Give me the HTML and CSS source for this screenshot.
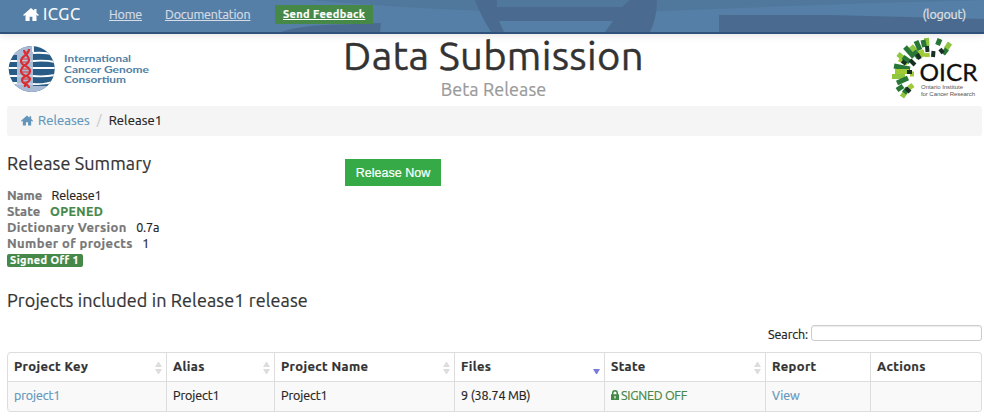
FILE: index.html
```html
<!DOCTYPE html>
<html lang="en">
<head>
<meta charset="utf-8">
<title>ICGC Data Submission</title>
<link rel="stylesheet" href="styles.css">
</head>
<body>
<nav class="navbar">
  <svg class="navbar-art" width="984" height="32" viewBox="0 0 984 32" aria-hidden="true">
    <path fill="#50779c" d="M310 0H984L870 3L660 11H490Q400 8 310 0Z"/>
    <path fill="#4a6b8f" d="M281 32Q300 25 340 24.500L381 23L380 32ZM475 0H497V7H622L630 0H657Q657 18 650 32H605L613 21H499L504 32H491Q481 16 475 0ZM719 15H830L984 19V32H719Z"/>
  </svg>
  <a class="brand" href="#"><svg width="16" height="13" viewBox="0 0 17 14"><path fill="#fff" d="M8.500 0L0 7.500L1 8.600L2.600 7.300V14H7V9.500H10V14H14.400V7.300L16 8.600L17 7.500L14.400 5V1H12V3Z"/></svg>ICGC</a>
  <a class="nav-link home" href="#">Home</a>
  <a class="nav-link docs" href="#">Documentation</a>
  <a class="feedback" href="#">Send Feedback</a>
  <a class="logout" href="#">(logout)</a>
</nav>
<header class="banner">
  <svg class="icgc-logo" width="160" height="50" viewBox="0 0 160 50">
    <defs><clipPath id="globe"><circle cx="24.700" cy="25" r="23"/></clipPath></defs>
    <g clip-path="url(#globe)">
      <path fill="#285c86" d="M0 0H48V50H0Z"/>
      <path fill="#a9bad5" d="M0 0H26V11H0ZM10 0H26V50H10ZM0 38H26V50H0Z"/>
      <path fill="#a9bad5" d="M26 42H48V50H26Z"/>
      <g fill="none" stroke="#fff" stroke-width="1.800"><path d="M26 9Q38 8 48 11M0 17H10M26 17Q38 16 48 18M0 24H10M26 24H48M0 32H10M26 32Q38 33 48 31M0 39H10M26 40Q38 41 48 37M26 1V8"/></g>
      <path fill="none" stroke="#dce4ef" stroke-width=".8" d="M10 17H26M10 24H26M10 32H26M10 40H26"/>
    </g>
    <g fill="none" stroke="#d92f32"><path stroke-width="2.200" d="M22 5C22 12 14 11 14 17S23 21 23 27S15 31 15 36S22 39 22 44M17 6C17 11 22 11 22 16S14 21 14 27S23 31 23 35S17 38 18 43"/><path stroke-width="1" d="M17 8H22M15 15H22M15 18H21M15 25H22M15 28H22M16 35H22M17 38H21"/></g>
    <g fill="#5180a5" class="icgc-text"><text x="57" y="18" textLength="67" lengthAdjust="spacingAndGlyphs">International</text><text x="57" y="28.600" textLength="85" lengthAdjust="spacingAndGlyphs">Cancer Genome</text><text x="57" y="39.200" textLength="62" lengthAdjust="spacingAndGlyphs">Consortium</text></g>
  </svg>
  <div class="titles"><h1>Data Submission</h1><h2>Beta Release</h2></div>
  <svg class="oicr-logo" width="90" height="64" viewBox="0 0 90 64">
    <g fill="none" stroke-width="5">
      <path stroke="#8fc63f" d="M36.500 1L37 9M60 6L56 12M21 9L30 19M8 17L18 25M2 39.500H15M12 60L17 53"/>
      <path stroke="#287737" d="M26 4L30 13M50 2L47.500 8M15 10L24 20M4 29L20 32M7 46L18 41M7 53L13 49"/>
      <path stroke="#a2ca37" d="M9 22L18 26M5 34.500H19M31 13L33 20M37 16L37.500 20M19 51L23 48M20 37H24"/>
      <path stroke="#287737" d="M33 3L34.500 10M57 12L53 17M24 14L29 21M13 20L20 25M14 56L18 51"/>
      <path stroke="#183024" stroke-width="4" d="M37 9L37.500 15M43.500 14L43 20M50 12L53 16M27 17L30 22M12 24L16 27M17 35H22M16 51L20 55M20 23L25 28"/>
    </g>
    <text class="oicr-name" x="29.500" y="44.300" textLength="58" lengthAdjust="spacingAndGlyphs">OICR</text>
    <text class="oicr-sub" x="31" y="51.800" textLength="42">Ontario Institute</text>
    <text class="oicr-sub" x="31" y="58.800" textLength="54">for Cancer Research</text>
  </svg>
</header>
<main class="content">
  <div class="breadcrumb"><svg width="12" height="11" viewBox="0 0 17 14"><path fill="#6295b9" d="M8.500 0L0 7.500L1 8.600L2.600 7.300V14H7V9.500H10V14H14.400V7.300L16 8.600L17 7.500L14.400 5V1H12V3Z"/></svg><a href="#" class="bc-link">Releases</a><span class="slash">/</span><span class="bc-current">Release1</span></div>
  <section class="overview">
    <div class="summary">
      <h3>Release Summary</h3>
      <dl>
        <div><dt class="t1">Name</dt><dd>Release1</dd></div>
        <div><dt class="t2">State</dt><dd class="opened">OPENED</dd></div>
        <div><dt class="t3">Dictionary Version</dt><dd>0.7a</dd></div>
        <div><dt class="t4">Number of projects</dt><dd>1</dd></div>
      </dl>
      <span class="badge">Signed Off 1</span>
    </div>
    <button class="release" type="button">Release Now</button>
  </section>
  <h3 class="h-projects">Projects included in Release1 release</h3>
  <div class="search"><label for="q">Search:</label><input id="q" type="text"></div>
  <table>
    <colgroup><col class="c1"><col class="c2"><col class="c3"><col class="c4"><col class="c5"><col class="c6"><col class="c7"></colgroup>
    <thead><tr>
      <th><div><span>Project Key</span><i class="sort"></i></div></th>
      <th><div><span>Alias</span><i class="sort"></i></div></th>
      <th><div><span>Project Name</span><i class="sort"></i></div></th>
      <th><div><span>Files</span><i class="sort desc"></i></div></th>
      <th><div><span>State</span><i class="sort"></i></div></th>
      <th><div><span>Report</span></div></th>
      <th><div><span>Actions</span></div></th>
    </tr></thead>
    <tbody><tr>
      <td><a href="#">project1</a></td><td>Project1</td><td>Project1</td><td>9 (38.74 MB)</td>
      <td class="signed"><svg width="8" height="10" viewBox="0 0 8 10"><path fill="#468847" fill-rule="evenodd" d="M0 4.300H1V3Q1 0 4 0T7 3V4.300H8V10H0ZM2.500 4.300H5.500V3Q5.500 1.500 4 1.500T2.500 3ZM3.400 6V8.500H4.600V6Z"/></svg><span>SIGNED OFF</span></td>
      <td><a href="#">View</a></td><td></td>
    </tr></tbody>
  </table>
</main>
</body>
</html>
```
FILE: styles.css
```css
* { box-sizing: border-box; }
body { margin: 0; background: #fff; color: #222; font: 12.5px/16px "Ubuntu", "Noto Sans", sans-serif; letter-spacing: -.1px; -webkit-text-stroke: .2px currentColor; overflow: hidden; }
a { color: #6295b9; text-decoration: none; }
h1, h2, h3, dl, dd { margin: 0; font-weight: 400; }
.navbar { position: relative; height: 34px; background: #557fa6; border-bottom: 2px solid #2e527c; box-shadow: 0 1px 8px rgba(0,0,0,.12); display: flex; align-items: center; padding: 0 18px 4px 23px; }
.navbar-art { position: absolute; left: 0; top: 0; }
.navbar a { position: relative; }
.brand { color: #fff; font-size: 16.5px; letter-spacing: .6px; display: flex; align-items: center; gap: 4px; width: 86px; }
.nav-link { color: #d5dce5; text-decoration: underline; letter-spacing: -.17px; }
.home { width: 56px; }
.docs { width: 110px; }
.feedback { background: #468847; color: #fff; font-weight: 700; font-size: 11px; letter-spacing: .35px; width: 98px; height: 19px; line-height: 18px; padding: 0 8px; text-decoration: underline; border-radius: 1px; white-space: nowrap; }
.logout { color: #e2e2e2; margin-left: auto; letter-spacing: -.2px; }
.banner { display: grid; grid-template-columns: 1fr 300px 1fr; height: 72px; padding: 0 4px 0 7px; }
.icgc-logo { margin-top: 10px; }
.icgc-text { font: 700 10px "Lato", sans-serif; letter-spacing: 0; -webkit-text-stroke: 0; }
.titles { text-align: center; display: flex; flex-direction: column; align-items: center; }
h1 { font-size: 40px; letter-spacing: .3px; line-height: 44px; color: #333; white-space: nowrap; -webkit-text-stroke-width: .4px; }
h2 { font-size: 18px; letter-spacing: .1px; line-height: 22px; color: #999; }
.oicr-logo { margin-top: 3px; justify-self: end; }
.oicr-name { font: 400 23px "Lato", sans-serif; letter-spacing: 0; fill: #111; stroke: #111; stroke-width: .3px; }
.oicr-sub { font: 6px "Liberation Sans", sans-serif; letter-spacing: 0; fill: #555; -webkit-text-stroke: 0; }
.content { padding: 0 2px 0 7px; }
.breadcrumb { height: 30px; background: #f5f5f5; border-radius: 3px; display: flex; align-items: center; padding: 0 14px 2px; font-size: 13px; letter-spacing: .1px; }
.bc-link { margin-left: 5px; }
.slash { margin: 0 7px; color: #ccc; }
.overview { display: flex; height: 155px; }
.summary { width: 338px; padding-top: 16px; }
h3 { font-size: 18px; letter-spacing: .1px; line-height: 22px; color: #333; }
dl { margin-top: 13px; }
dl div { display: flex; height: 16px; align-items: center; }
dt { font-size: 13px; font-weight: 700; color: #777; margin-right: 9.500px; }
.t1 { letter-spacing: -.1px; }
.t2 { letter-spacing: .15px; }
.t3 { letter-spacing: .35px; }
.t4 { letter-spacing: .4px; }
.opened { color: #468847; font-weight: 700; letter-spacing: .35px; }
.badge { display: block; width: 76px; height: 13px; margin-top: 3px; padding-left: 3px; background: #468847; color: #fff; font-weight: 700; font-size: 11px; letter-spacing: .4px; line-height: 13px; white-space: nowrap; border-radius: 2px; }
.release { width: 96px; height: 27px; margin-top: 23px; padding: 0; border: 0; background: #35aa47; color: #fff; font: 12.5px "Liberation Sans", sans-serif; letter-spacing: 0; }
.h-projects { margin-top: -2px; }
.search { display: flex; justify-content: flex-end; align-items: center; gap: 3px; margin-top: 14px; height: 16px; }
.search label { padding-top: 2px; }
.search input { width: 171px; height: 16px; border: 1px solid #ccc; border-radius: 3px; padding: 0; box-shadow: inset 0 1px 1px rgba(0,0,0,.08); }
table { width: 975px; margin-top: 11px; table-layout: fixed; border-collapse: separate; border-spacing: 0; border: 1px solid #ddd; border-left: 0; border-radius: 4px; }
th, td { border-left: 1px solid #ddd; padding: 0 6px; text-align: left; white-space: nowrap; }
th { height: 28px; padding: 0 4px 2px 6px; color: #333; font-weight: 700; font-size: 13px; letter-spacing: .38px; }
th div { display: flex; justify-content: space-between; align-items: center; }
td { height: 30px; padding-bottom: 4px; border-top: 1px solid #ddd; background: #f9f9f9; }
th:first-child { border-top-left-radius: 4px; }
td:first-child { border-bottom-left-radius: 4px; }
td:last-child { border-bottom-right-radius: 4px; }
.c1 { width: 159px; } .c2 { width: 108px; } .c3 { width: 180px; } .c4 { width: 150px; } .c5 { width: 161px; } .c6 { width: 105px; }
.sort { width: 7px; height: 12px; margin-top: 3px; display: flex; flex-direction: column; justify-content: space-between; }
.sort::before, .sort::after { content: ""; border: 3px solid transparent; }
.sort::before { border-top: 0; border-bottom: 5px solid #ddd; }
.sort::after { border-bottom: 0; border-top: 5px solid #ddd; }
.desc::before { visibility: hidden; }
.desc::after { border-top-color: #7b7bdc; }
.signed { color: #468847; letter-spacing: -.25px; }
.signed svg { margin-right: 2px; }
```
